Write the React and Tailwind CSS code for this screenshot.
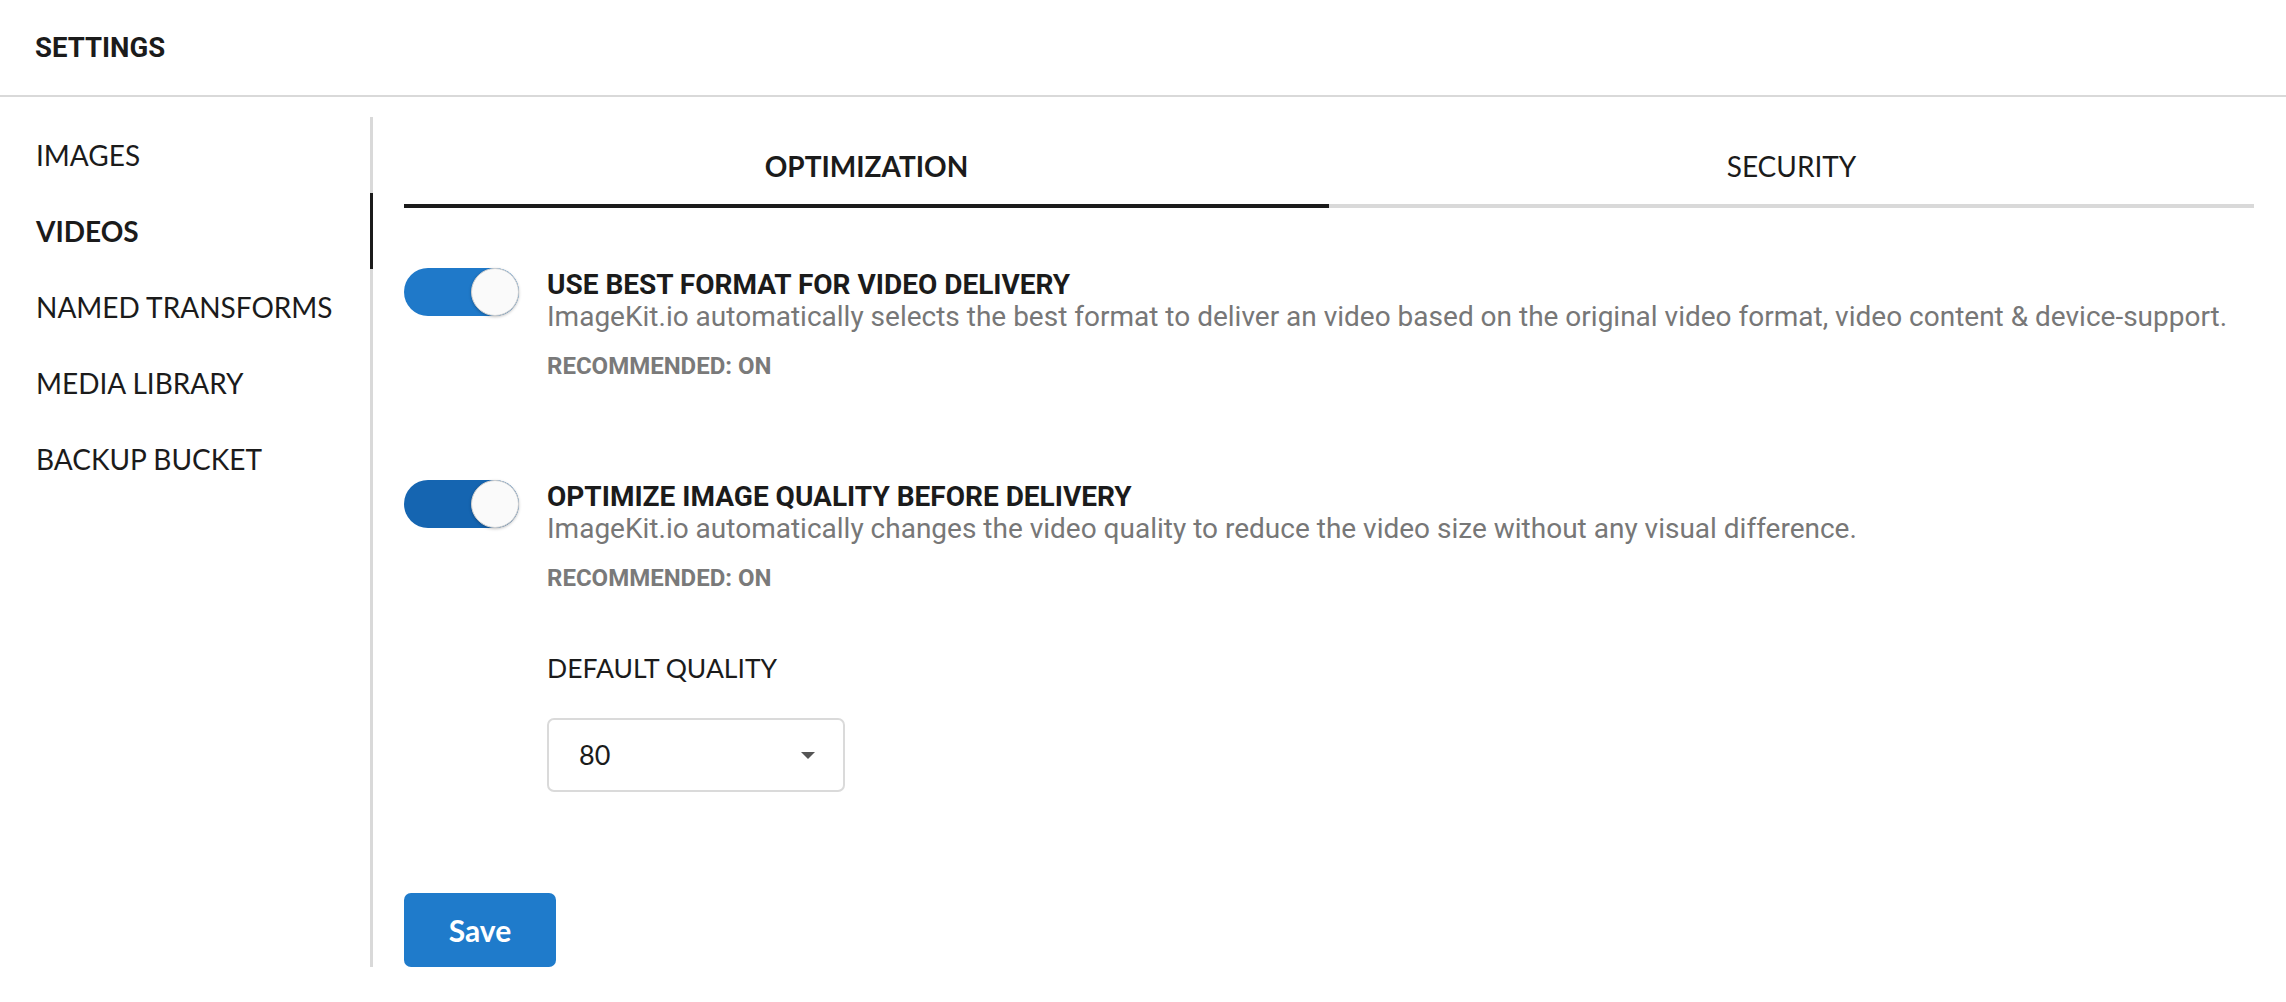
import { useState } from "react";

const navItems = ["IMAGES", "VIDEOS", "NAMED TRANSFORMS", "MEDIA LIBRARY", "BACKUP BUCKET"];

function Toggle({ on, dark }) {
  return (
    <div
      className={`relative w-[115px] h-[48px] shrink-0 rounded-full ${
        dark ? "bg-[#1565b1]" : "bg-[#1f79c9]"
      }`}
    >
      {on && (
        <span className="absolute right-0 top-0 w-[48px] h-[48px] rounded-full bg-[#fafafa] border border-[#cfcfcf] shadow-[0_1px_3px_rgba(0,0,0,0.25)]" />
      )}
    </div>
  );
}

function Option({ title, desc, dark, children }) {
  return (
    <div className="flex gap-[28px]">
      <Toggle on dark={dark} />
      <div className="flex flex-col">
        <div className="font-['Roboto',sans-serif] font-bold text-[28px] leading-[34px] text-[#1b1b1b]">
          {title}
        </div>
        <div className="font-['Roboto',sans-serif] text-[28px] leading-[30px] text-[#777777]">
          {desc}
        </div>
        <div className="mt-[20px] font-['Roboto',sans-serif] font-bold text-[24px] leading-[28px] text-[#7a7a7a]">
          RECOMMENDED: ON
        </div>
        {children}
      </div>
    </div>
  );
}

export default function App() {
  const [active] = useState("VIDEOS");

  return (
    <div className="w-[2286px] h-[1002px] bg-white">

      {/* HEADER */}
      <header className="h-[97px] flex items-center pl-[35px] border-b-2 border-[#d9d9d9]">
        <h1 className="font-['Roboto',sans-serif] font-bold text-[27.5px] text-[#1b1b1b]">
          SETTINGS
        </h1>
      </header>

      <div className="flex">

        {/* SIDEBAR */}
        <nav className="w-[373px] shrink-0 mt-[20px] border-r-[3px] border-[#d9d9d9]">
          {navItems.map((item) => (
            <div
              key={item}
              className={`h-[76px] flex items-center pl-[36px] mr-[-3px] border-r-[3px] font-['Lato',sans-serif] text-[28px] text-[#1b1b1b] ${
                item === active ? "border-[#1b1b1b] font-bold" : "border-transparent"
              }`}
            >
              {item}
            </div>
          ))}
        </nav>

        {/* CONTENT */}
        <main className="flex-1 pl-[31px] pr-[32px] pt-[30px]">

          {/* TABS */}
          <div className="flex">
            <div className="flex-1 h-[81px] flex items-center justify-center border-b-4 border-[#1b1b1b] font-['Lato',sans-serif] font-bold text-[28px] text-[#1b1b1b]">
              OPTIMIZATION
            </div>
            <div className="flex-1 h-[81px] flex items-center justify-center border-b-4 border-[#d9d9d9] font-['Lato',sans-serif] text-[28px] text-[#1b1b1b]">
              SECURITY
            </div>
          </div>

          <div className="mt-[60px]">
            <Option
              title="USE BEST FORMAT FOR VIDEO DELIVERY"
              desc="ImageKit.io automatically selects the best format to deliver an video based on the original video format, video content & device-support."
            />
          </div>

          <div className="mt-[100px]">
            <Option
              dark
              title="OPTIMIZE IMAGE QUALITY BEFORE DELIVERY"
              desc="ImageKit.io automatically changes the video quality to reduce the video size without any visual difference."
            >
              <div className="mt-[60px] font-['Lato',sans-serif] text-[26.5px] leading-[32px] text-[#1b1b1b]">
                DEFAULT QUALITY
              </div>
              <div className="mt-[34px] w-[298px] h-[74px] flex items-center justify-between pl-[30px] pr-[28px] border-2 border-[#dadada] rounded-[7px]">
                <span className="font-['Lato',sans-serif] text-[27px] text-[#1b1b1b]">80</span>
                <svg width="14" height="7" viewBox="0 0 14 7">
                  <path d="M0 0 L14 0 L7 7 Z" fill="#555555" />
                </svg>
              </div>
            </Option>
          </div>

          {/* ACTIONS */}
          <button className="mt-[101px] w-[152px] h-[74px] rounded-[7px] bg-[#1f7bcb] text-white font-['Lato',sans-serif] font-bold text-[30px]">
            Save
          </button>

        </main>
      </div>
    </div>
  );
}
